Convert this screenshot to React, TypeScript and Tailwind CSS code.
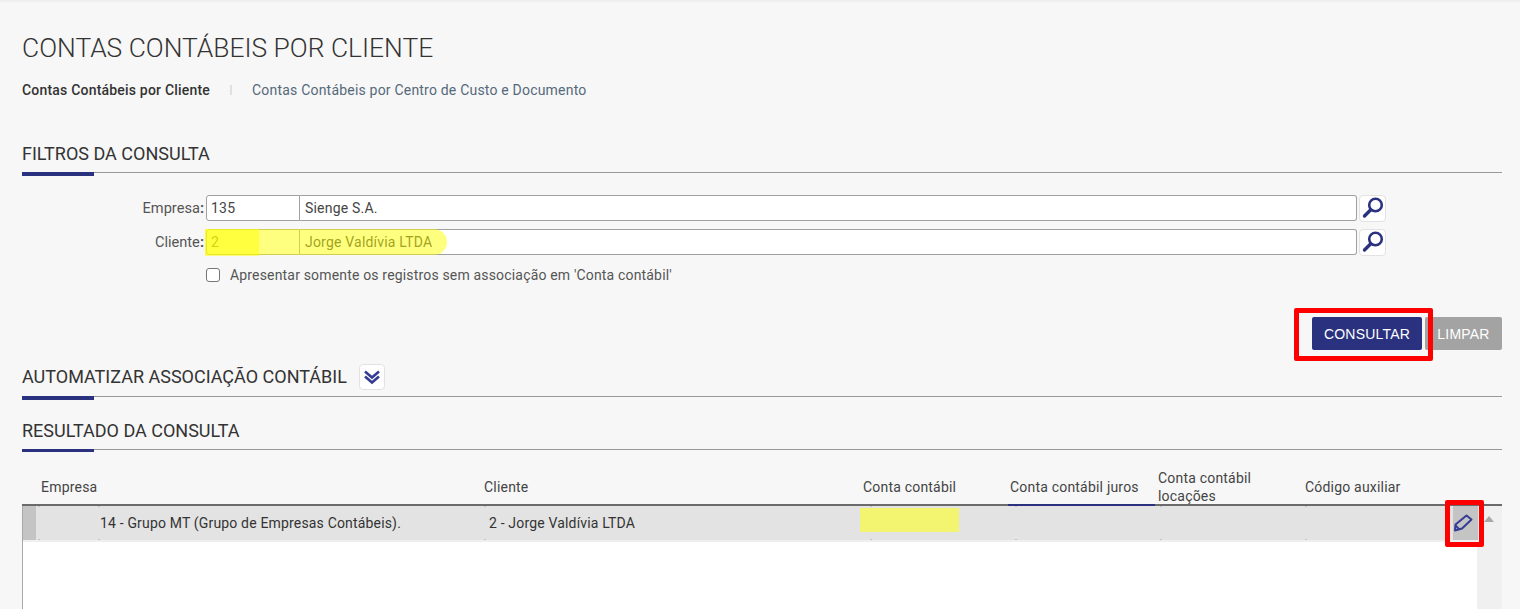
import { Fragment } from "react";

const navy = "#2a317f";
const ticks = [15, 75, 461, 847, 992, 1137, 1282];

function SectionTitle({ title, children, className, rowHeight = "h-[31px]", accent = "h-1" }: { title: string; children?: React.ReactNode; className?: string; rowHeight?: string; accent?: string }) {
  return (
    <div className={className}>
      <div className={`flex items-start ${rowHeight}`}>
        <div className="flex h-[26px] items-center">
          <h2 className="text-[18px] leading-none font-normal text-[#333]">{title}</h2>
          {children}
        </div>
      </div>
      <div className="relative h-px bg-[#999]">
        <div className={`absolute top-0 left-0 w-[72px] bg-[#2a317f] ${accent}`} />
      </div>
    </div>
  );
}

function SearchButton() {
  return (
    <button className="ml-0.5 flex h-[27px] w-[27px] items-center justify-center rounded-sm border border-[#e2e2e2] bg-white">
      <svg width="22" height="22" viewBox="0 0 22 22" fill="none" stroke={navy}>
        <circle cx="13.5" cy="8" r="6.3" strokeWidth="2.6" />
        <path d="M8.5 13 2.5 19" strokeWidth="3.4" strokeLinecap="round" />
      </svg>
    </button>
  );
}

function Field({ label, code, name, children }: { label: string; code: string; name: string; children?: React.ReactNode }) {
  return (
    <div className="relative flex h-[26px] items-center">
      <label className="w-[184px] pt-px pr-0.5 text-right text-[14.6px] text-[#555]">
        {label}
        <span className="font-bold">:</span>
      </label>
      <div className="flex h-[26px] w-[94px] items-center rounded-l-[3px] border border-[#a0a0a0] bg-white pl-1 text-[14px] tracking-[0.2px] text-[#444]">{code}</div>
      <div className="flex h-[26px] w-[1057px] items-center rounded-r-[3px] border border-l-0 border-[#a0a0a0] bg-white pl-[5px] text-[14px] tracking-[0.2px] text-[#444]">{name}</div>
      <SearchButton />
      {children}
    </div>
  );
}

export default function App() {
  return (
    <div className="relative h-[609px] overflow-hidden bg-[#f7f7f7] pr-[18px] pl-[22px] font-['Roboto',sans-serif] text-[#333]">
      <div className="absolute inset-x-0 top-0 h-0.5 bg-[#f0f0f0]" />

      <h1 className="pt-[33px] text-[26.4px] leading-[30px] font-light text-[#333]">CONTAS CONTÁBEIS POR CLIENTE</h1>

      <nav className="mt-[18px] flex h-[18px] items-center text-[14px] tracking-[0.2px]">
        <span className="font-medium text-[#333]">Contas Contábeis por Cliente</span>
        <span className="mx-[20px] h-[10px] w-0.5 bg-[#e0e0e0]" />
        <a className="text-[#55697a]">Contas Contábeis por Centro de Custo e Documento</a>
      </nav>

      <SectionTitle title="FILTROS DA CONSULTA" className="mt-[42px]" />

      <div className="mt-[22px] flex flex-col gap-2">
        <Field label="Empresa" code="135" name="Sienge S.A." />
        <Field label="Cliente" code="2" name="Jorge Valdívia LTDA">
          <div className="absolute top-0 left-[183px] h-[26px] w-[242px] rounded-r-full bg-[#ffff00]/50" />
          <div className="absolute top-0 left-[183px] h-[27px] w-[54px] bg-[#ffff00]/50" />
        </Field>
      </div>

      <label className="mt-[13px] ml-[184px] flex h-[14px] items-center gap-[10px] text-[14px] tracking-[0.17px] text-[#555]">
        <span className="h-[14px] w-[14px] rounded-[3px] border border-[#767676] bg-white" />
        Apresentar somente os registros sem associação em 'Conta contábil'
      </label>

      <div className="relative mt-[35px] flex justify-end gap-[3px]">
        <button className="h-[33px] w-[110px] rounded-[2px] bg-[#2a317f] pt-px font-['Liberation_Sans',sans-serif] text-[14px] tracking-[0.2px] text-white">CONSULTAR</button>
        <button className="h-[33px] w-[77px] rounded-[2px] bg-[#a3a3a3] pt-px font-['Liberation_Sans',sans-serif] text-[14px] tracking-[0.2px] text-white">LIMPAR</button>
        <div className="absolute top-[-9px] right-[69px] h-[53px] w-[139px] rounded-[2px] border-[5px] border-[#ff0000]" />
      </div>

      <SectionTitle title="AUTOMATIZAR ASSOCIAÇÃO CONTÁBIL" className="mt-[14px]" rowHeight="h-[32px]">
        <button className="ml-[12px] flex h-[26px] w-[26px] items-center justify-center rounded-sm border border-[#e2e2e2] bg-white">
          <svg width="20" height="20" viewBox="0 0 20 20" fill="none" stroke="#343c94" strokeWidth="2.6">
            <path d="m3 4.5 7 6 7-6" />
            <path d="m3 9.5 7 6 7-6" />
          </svg>
        </button>
      </SectionTitle>

      <SectionTitle title="RESULTADO DA CONSULTA" className="mt-[21px]" accent="h-[3px]" />

      <div className="mt-[19px]">
        <div className="grid h-[35px] grid-cols-[14px_443px_379px_150px_147px_145px_152px_25px_25px] items-center pb-[3px] text-[14px] leading-[18px] tracking-[0.2px] text-[#444]">
          <div />
          <div className="pl-[5px]">Empresa</div>
          <div className="pl-[5px]">Cliente</div>
          <div className="pl-[5px]">Conta contábil</div>
          <div className="self-stretch pt-1 pl-0.5">
            <div className="flex h-[28px] items-center">Conta contábil juros</div>
          </div>
          <div className="pl-[3px]">Conta contábil locações</div>
          <div className="pl-[5px]">Código auxiliar</div>
        </div>

        <div className="h-0.5 bg-[#6b6b6b]">
          <div className="ml-[986px] h-0.5 w-[147px] bg-[#2a317f]" />
        </div>

        <div className="flex h-[200px]">
          <div className="w-[1455px] border-l border-[#a8a8a8] bg-white">
            <div className="relative grid h-[36px] grid-cols-[13px_443px_379px_150px_145px_148px_152px_25px] items-center border-b-2 border-[#efefef] bg-[#e3e3e3] text-[14px] tracking-[0.17px] text-[#333]">
              <div className="h-full bg-[#c4c4c4]" />
              <div className="pl-[64px]">14 - Grupo MT (Grupo de Empresas Contábeis).</div>
              <div className="pl-[10px]">2 - Jorge Valdívia LTDA</div>
              <div className="mt-0.5 ml-[2px] h-[24px] w-[99px] self-start bg-[#f3f570]" />
              <div />
              <div />
              <div />
              <div className="relative flex h-full items-center bg-[#c4c4c4]">
                <svg width="20" height="20" viewBox="0 0 20 20" fill="none" stroke="#343c94" strokeWidth="2" strokeLinejoin="round">
                  <path d="M13.5 2.5 18.5 6.5 9 15.5 2 17.5 2.5 11.5Z" />
                  <path d="M2.5 12.5 6.5 16.5" />
                </svg>
                <div className="absolute top-[-6px] left-[-8px] h-[47px] w-[39px] rounded-[2px] border-[5px] border-[#ff0000]" />
              </div>
              {ticks.map((x) => (
                <Fragment key={x}>
                  <i className="absolute top-0 h-px w-0.5 bg-[#c2c2c2]" style={{ left: x }} />
                  <i className="absolute bottom-0 h-px w-0.5 bg-[#c2c2c2]" style={{ left: x }} />
                </Fragment>
              ))}
            </div>
          </div>
          <div className="w-[25px] bg-[#f0f0f0] pt-[10px] pl-[7px]">
            <div className="h-0 w-0 border-x-[5.5px] border-b-[6px] border-x-transparent border-b-[#a8a8a8]" />
          </div>
        </div>
      </div>
    </div>
  );
}
